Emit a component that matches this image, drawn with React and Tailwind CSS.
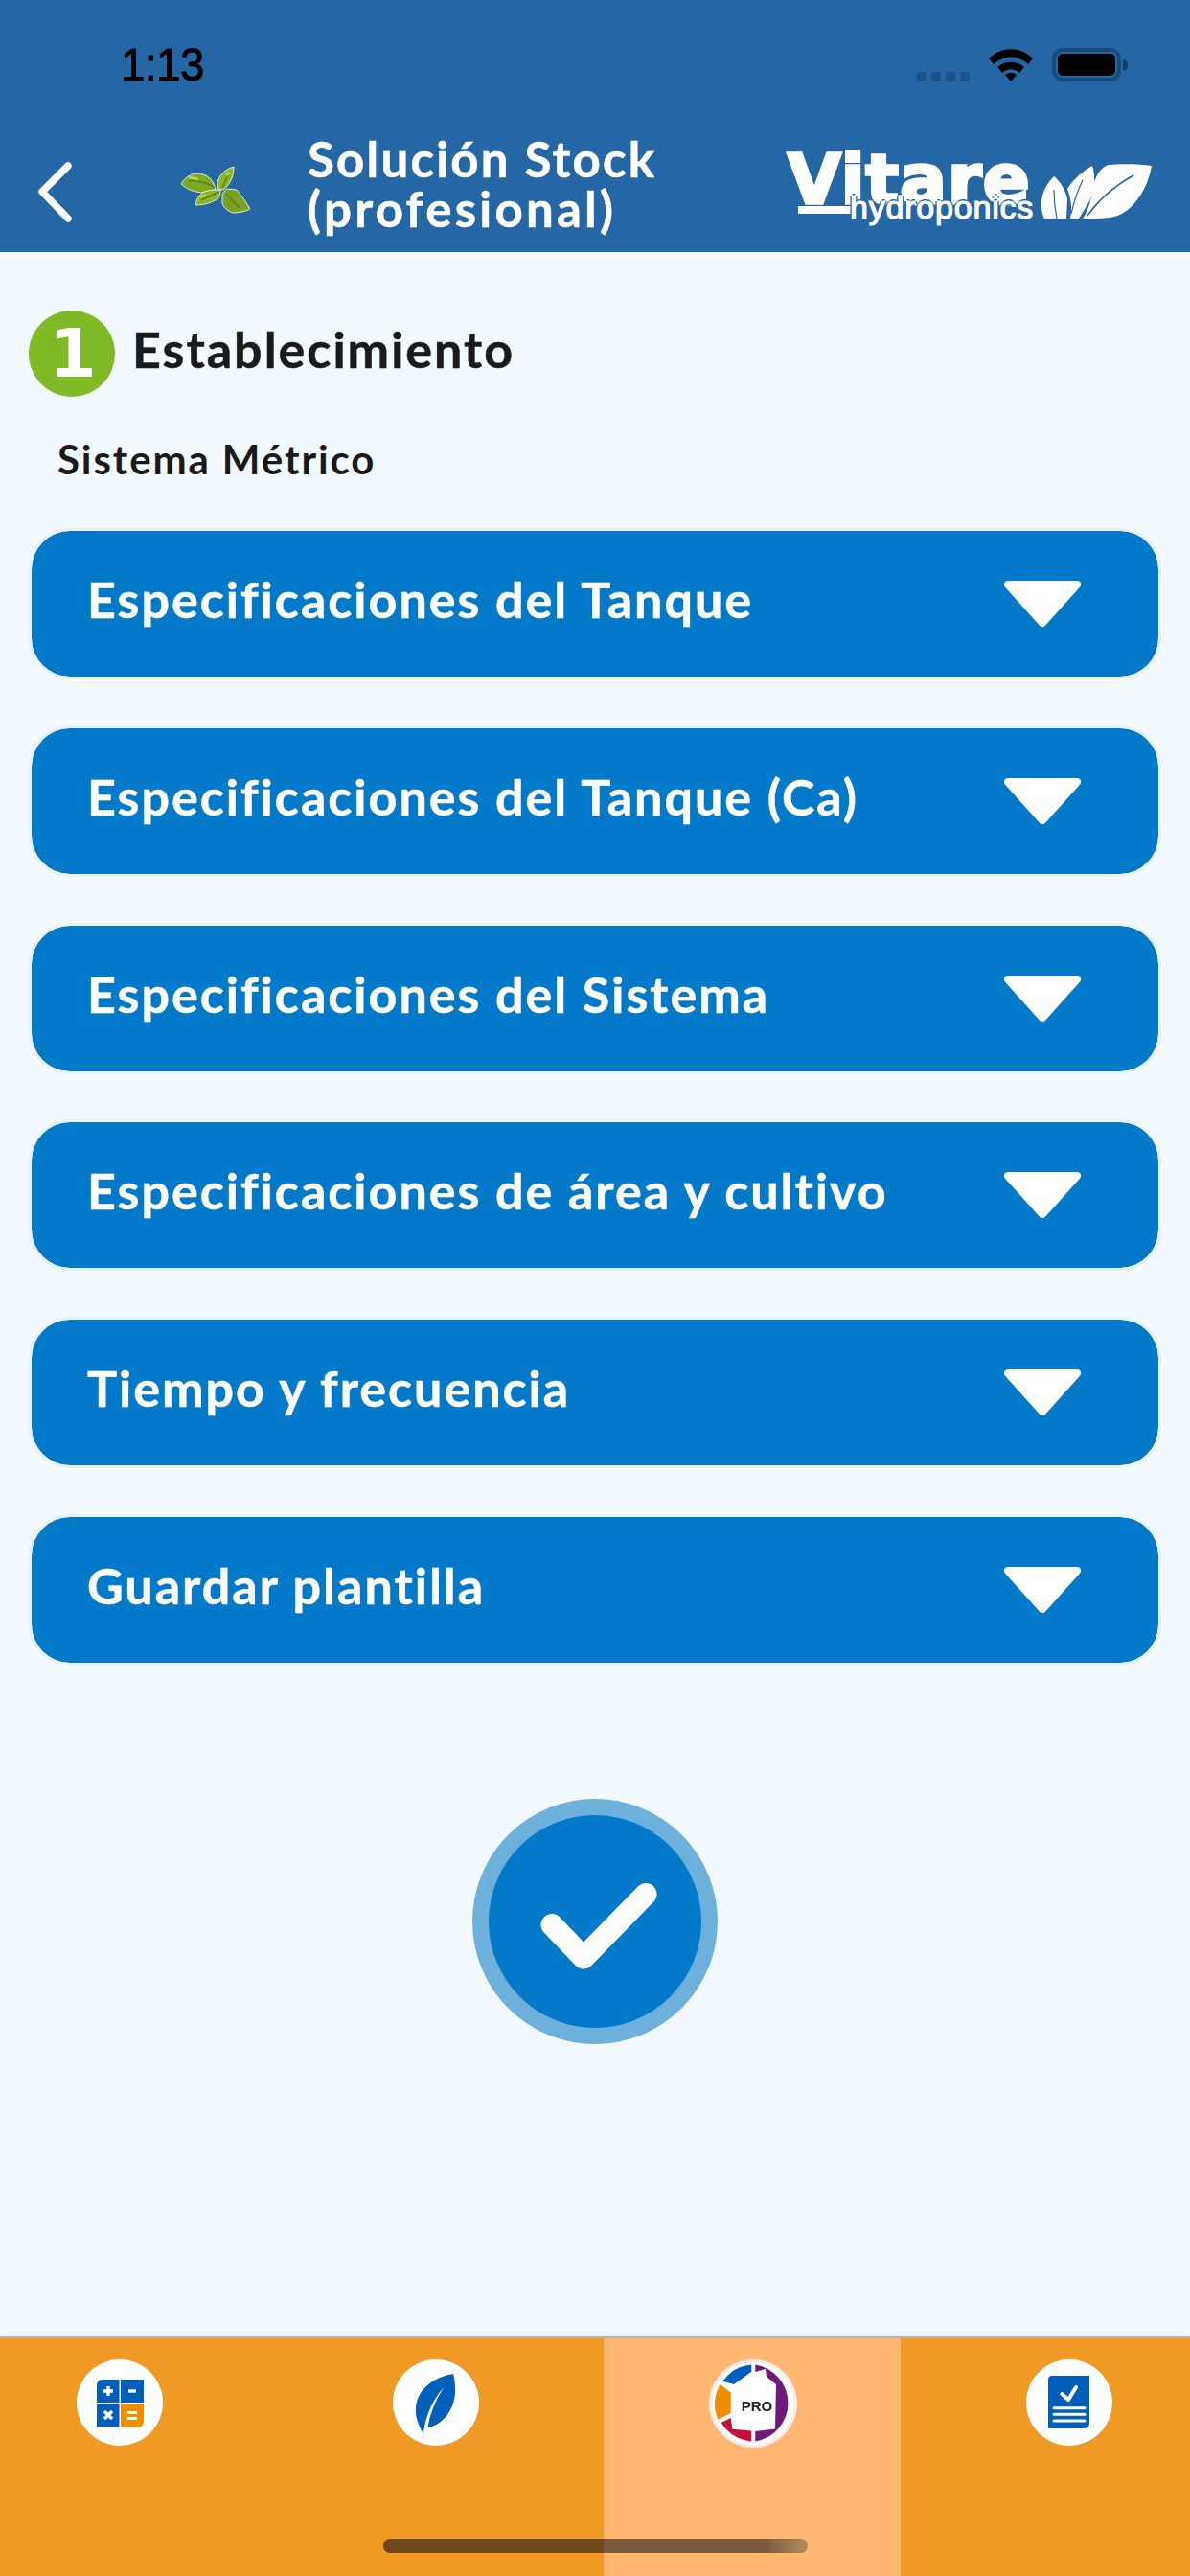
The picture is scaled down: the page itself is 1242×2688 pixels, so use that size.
const FONT = "font-['Lato','Open_Sans',sans-serif]";

function Wifi() {
  return (
    <svg width="48" height="36" viewBox="0 0 48 36">
      <path d="M1 11 C14 -2 34 -2 47 11 L42 17 C31 7 17 7 6 17 Z" fill="#000" />
      <path d="M10 20 C18 13 30 13 38 20 L33 26 C27 21 21 21 15 26 Z" fill="#000" />
      <path d="M18 28 C22 25 26 25 30 28 L24 35 Z" fill="#000" />
    </svg>
  );
}

function Plant() {
  return (
    <svg width="74" height="50" viewBox="0 0 74 50">
      <path d="M0 18 C5 10 11 7 18 7 C26 8 32 12 34 18 L36 23 C26 29 11 28 0 18 Z" fill="#7fa823" stroke="#eef4e4" strokeWidth="0.9" />
      <path d="M15 40 C16 33 20 28 24 26 C30 24 36 24 41 24 C41 29 40 31 39 33 C32 38 23 40 15 40 Z" fill="#8ab227" stroke="#eef4e4" strokeWidth="0.9" />
      <path d="M38 16 C40 8 47 2 55 0 C55 6 54 11 51 16 C49 20 46 23 43 24 L39 24 Z" fill="#8cb52a" stroke="#eef4e4" strokeWidth="0.9" />
      <path d="M43 29 C44 26 46 24 48 23 L58 24 C63 30 68 37 72 44 C66 47 60 48 54 48 C48 46 44 42 43 38 Z" fill="#7ba122" stroke="#eef4e4" strokeWidth="0.9" />
      <path d="M8 15 C18 14 28 17 35 22 M51 5 L43 22 M47 28 L61 43 M21 35 L40 26" stroke="#55801c" strokeWidth="1.4" fill="none" />
      <path d="M8 11 L18 13 M47 9 L51 6 M20 32 L26 29" stroke="#b8d94a" strokeWidth="2.4" fill="none" />
    </svg>
  );
}

function LogoLeaves() {
  return (
    <svg width="118" height="60" viewBox="0 0 118 60">
      <path d="M5 58 C-1 45 1 28 15 14 C22 20 27 28 29 38 L28 58 Z" fill="#fff" />
      <path d="M32 58 C34 48 33 38 29 27 C36 16 46 8 55 3 C59 14 57 30 52 40 L41 58 Z" fill="#fff" />
      <path d="M45 58 C52 48 54 36 56 24 C58 14 64 4 72 2 C86 1 104 1 117 3 C113 26 100 46 84 54 C76 58 62 58 45 58 Z" fill="#fff" />
      <path d="M50 55 C62 38 80 23 98 13" stroke="#2566a5" strokeWidth="1.6" fill="none" />
      <path d="M33 53 C36 40 40 28 45 18" stroke="#2566a5" strokeWidth="1.2" fill="none" />
      <path d="M15 28 C15 38 16 48 18 58" stroke="#2566a5" strokeWidth="1.2" fill="none" />
    </svg>
  );
}

function Logo() {
  return (
    <div className="relative w-[265px] h-[80px] text-white shrink-0">
      <span className="absolute left-[2px] top-[-8px] font-['DejaVu_Sans',sans-serif] text-[72px] leading-none font-bold tracking-[1.2px] [-webkit-text-stroke:3.5px_white] whitespace-nowrap">Vitare</span>
      <span className="absolute left-[13px] top-[56px] w-[55px] h-[8px] bg-white" />
      <span className="absolute left-[67px] top-[40px] font-['Liberation_Sans',sans-serif] text-[34px] leading-none font-normal tracking-[0.8px] [-webkit-text-stroke:1.2px_white] [text-shadow:2px_0_#2566a5,-2px_0_#2566a5,0_-2px_#2566a5,0_2px_#2566a5] whitespace-nowrap">hydroponics</span>
    </div>
  );
}

function Triangle() {
  return (
    <svg width="80" height="48" viewBox="0 0 80 48">
      <path d="M4 4 H76 L40 44 Z" fill="#fff" stroke="#fff" strokeWidth="8" strokeLinejoin="round" />
    </svg>
  );
}

function Card({ label }) {
  return (
    <div className="h-[152px] rounded-[40px] bg-[#0279c9] outline-[3px] outline-[#e9f1f6] flex items-center justify-between pl-[58px] pr-[81px]">
      <span className={`${FONT} text-[52px] leading-none font-bold tracking-[2px] text-white pb-[10px] [-webkit-text-stroke:0.5px_white]`}>{label}</span>
      <Triangle />
    </div>
  );
}

function Circle({ children }) {
  return (
    <div className="w-[90px] h-[90px] rounded-full bg-white flex items-center justify-center">
      {children}
    </div>
  );
}

function CalcIcon() {
  return (
    <svg width="90" height="90" viewBox="0 0 90 90">
      <path d="M21 45 V27 Q21 21 27 21 H44.5 V45 Z" fill="#005fba" />
      <rect x="46" y="21" width="24" height="24" fill="#005fba" />
      <rect x="21" y="46.5" width="23.5" height="24" fill="#005fba" />
      <path d="M46 46.5 H70 V64 Q70 70.5 64 70.5 H46 Z" fill="#f08c00" />
      <path d="M33 28 V38 M28 33 H38" stroke="#fff" strokeWidth="3.4" />
      <path d="M54 33 H62" stroke="#fff" strokeWidth="3.4" />
      <path d="M29 54 L37 62 M37 54 L29 62" stroke="#fff" strokeWidth="3.4" />
      <path d="M53 55.5 H63 M53 61.5 H63" stroke="#fff" strokeWidth="2.8" />
    </svg>
  );
}

function LeafIcon() {
  return (
    <svg width="90" height="90" viewBox="0 0 90 90">
      <path d="M63 15 C44 18 26 30 24 50 C23 62 28 70 32 78 C33 66 38 46 54 28 C42 46 37 64 37 71 C52 68 66 52 65 30 C65 24 64 19 63 15 Z" fill="#005fba" />
    </svg>
  );
}

function ProIcon() {
  return (
    <div className="relative w-[92px] h-[92px] flex items-center justify-center">
      <svg width="92" height="92" viewBox="0 0 92 92" className="absolute inset-0">
        <circle cx="46" cy="46" r="46" fill="#f3ecef" />
        <circle cx="46" cy="46" r="43" fill="#fff" />
        <path d="M48.3 5.5 A40.5 40.5 0 0 1 48.3 85.5 V75 L69 72.5 L70 26 L60 18 L59 10 L48.3 13 Z" fill="#6f1a7a" />
        <path d="M44.3 5.5 A40.5 40.5 0 0 0 14.3 22.7 L26 26 L44.3 12.7 Z" fill="#005fba" />
        <path d="M11.7 26 A40.5 40.5 0 0 0 9.3 62.7 L22.7 56 V34.4 Z" fill="#f08c00" />
        <path d="M12.7 66 A40.5 40.5 0 0 0 44.3 85.5 V74.4 L24.3 72.7 L22.7 61 Z" fill="#c8103c" />
      </svg>
      <span className="relative font-['Liberation_Sans',sans-serif] text-[15px] leading-none font-bold text-[#222] mt-[4px] ml-[8px] blur-[0.5px]">PRO</span>
    </div>
  );
}

function DocIcon() {
  return (
    <svg width="90" height="90" viewBox="0 0 90 90">
      <path d="M23 21 Q23 17 27 17 H66 V66 Q66 72 60 72 H23 Z" fill="#005fba" />
      <path d="M37.3 36 L44 42 L52 29" stroke="#fff" strokeWidth="4" fill="none" strokeLinecap="round" strokeLinejoin="round" />
      <path d="M29 50.7 H61 M29 57.3 H61 M29 64 H61" stroke="#fff" strokeWidth="3" strokeLinecap="round" />
    </svg>
  );
}

const cards = [
  "Especificaciones del Tanque",
  "Especificaciones del Tanque (Ca)",
  "Especificaciones del Sistema",
  "Especificaciones de área y cultivo",
  "Tiempo y frecuencia",
  "Guardar plantilla",
];

export default function App() {
  return (
    <div className="w-[1242px] h-[2688px] flex flex-col bg-[#f2faff] overflow-hidden relative">
      <header className="h-[263px] bg-[#2566a5] flex flex-col shrink-0">
        <div className="h-[140px] pt-[44px] pl-[126px] pr-[65px] flex justify-between items-start">
          <span className="font-['Liberation_Sans',sans-serif] text-[48px] leading-[48px] font-normal text-black [-webkit-text-stroke:1px_black] tracking-[-0.5px] scale-x-[0.95] origin-left">1:13</span>
          <div className="flex items-start gap-[19px] pt-[6px]">
            <div className="flex gap-[5px] mt-[25px]">
              <span className="w-[10px] h-[10px] rounded-[3px] bg-[#1c5288]" />
              <span className="w-[10px] h-[10px] rounded-[3px] bg-[#1c5288]" />
              <span className="w-[10px] h-[10px] rounded-[3px] bg-[#1c5288]" />
              <span className="w-[10px] h-[10px] rounded-[3px] bg-[#1c5288]" />
            </div>
            <Wifi />
            <div className="flex items-center">
              <div className="w-[72px] h-[35px] rounded-[11px] border-[4px] border-[#1b4b7d] p-[2px]">
                <div className="w-full h-full rounded-[5px] bg-black" />
              </div>
              <div className="ml-[2px] w-[5px] h-[12px] rounded-r-full bg-[#123c68]" />
            </div>
          </div>
        </div>
        <div className="flex-1 flex items-start pl-[38px]">
          <svg width="40" height="66" viewBox="0 0 40 66" className="mt-[28px] shrink-0">
            <path d="M33 5 L6 32 L33 60" stroke="#fff" strokeWidth="7.5" fill="none" strokeLinecap="round" strokeLinejoin="round" />
          </svg>
          <div className="ml-[111px] mt-[34px] shrink-0">
            <Plant />
          </div>
          <div className={`${FONT} ml-[58px] text-[51px] leading-[52px] font-bold tracking-[2.2px] text-white w-[499px] shrink-0 [-webkit-text-stroke:0.5px_white]`}>
            Solución Stock
            <br />
            <span className="tracking-[3.2px]">(profesional)</span>
          </div>
          <div className="mt-[19px]">
            <Logo />
          </div>
          <div className="mt-[30px]">
            <LogoLeaves />
          </div>
        </div>
      </header>

      <main className="flex-1 flex flex-col">
        <div className="pl-[30px] pt-[61px] flex items-center gap-[18px]">
          <div className="w-[90px] h-[90px] rounded-full bg-[#80bb27] flex items-center justify-center font-['DejaVu_Sans',sans-serif] text-[70px] font-bold text-white leading-none pl-[2px]">
            1
          </div>
          <span className={`${FONT} text-[52px] leading-none font-bold tracking-[2px] text-[#1a1a1a] pb-[10px] [-webkit-text-stroke:0.5px_#1a1a1a]`}>Establecimiento</span>
        </div>
        <div className={`${FONT} pl-[60px] mt-[42px] text-[42px] leading-[46px] font-bold tracking-[1.9px] text-[#1a1a1a]`}>Sistema Métrico</div>
        <div className="mt-[52px] px-[33px] flex flex-col gap-[53.8px]">
          {cards.map((c) => (
            <Card key={c} label={c} />
          ))}
        </div>
        <div className="mt-[142px] flex justify-center">
          <div className="w-[256px] h-[256px] rounded-full bg-[#0279c9] border-[17px] border-[#6db0dc] flex items-center justify-center">
            <svg width="120" height="100" viewBox="0 0 120 100" className="overflow-visible">
              <path d="M15 53.5 L48 88 L113 21.5" stroke="#fff" strokeWidth="23" fill="none" strokeLinecap="round" strokeLinejoin="round" />
            </svg>
          </div>
        </div>
      </main>

      <footer className="h-[250px] shrink-0 bg-[#f09a26] border-t-2 border-[#b5b5b0] shadow-[0_-8px_12px_rgba(0,0,0,0.02)] flex relative">
        <div className="w-[330px] pl-[80px] pt-[22px]"><Circle><CalcIcon /></Circle></div>
        <div className="w-[300px] pl-[80px] pt-[22px]"><Circle><LeafIcon /></Circle></div>
        <div className="w-[310px] pl-[110px] pt-[22px] bg-[#ffb771]"><ProIcon /></div>
        <div className="flex-1 pl-[131px] pt-[22px]"><Circle><DocIcon /></Circle></div>
        <div className="absolute left-[400px] top-[209px] w-[443px] h-[15px] rounded-[7px] bg-[linear-gradient(90deg,#70491a_52%,#7c5a3c_52%,#7c5a3c_90%,#b38d5f)]" />
      </footer>
    </div>
  );
}
